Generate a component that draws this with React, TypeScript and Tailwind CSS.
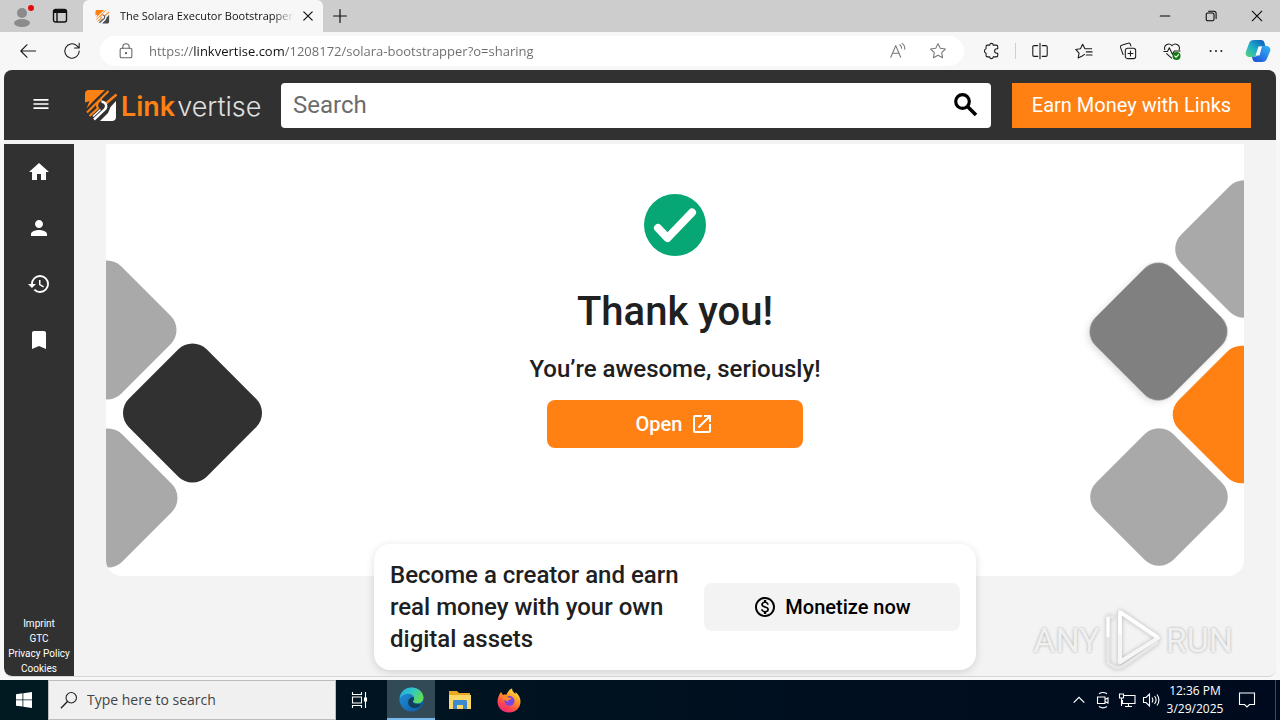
import type { ReactNode } from "react";
import {
  MdBookmark,
  MdHistory,
  MdHome,
  MdMenu,
  MdOpenInNew,
  MdOutlineMonetizationOn,
  MdPerson,
} from "react-icons/md";

const UI = "font-['Open_Sans','Noto_Sans',sans-serif]";

function Line({ size = 18, children, className = "" }: { size?: number; children: ReactNode; className?: string }) {
  return (
    <svg
      width={size}
      height={size}
      viewBox="0 0 20 20"
      fill="none"
      stroke="currentColor"
      strokeWidth="1.2"
      strokeLinecap="round"
      strokeLinejoin="round"
      className={className}
      aria-hidden="true"
    >
      {children}
    </svg>
  );
}

function LinkvertiseMark({ size, dark = false }: { size: number; dark?: boolean }) {
  const low = dark ? "#4a4a4a" : "#ffffff";
  return (
    <svg width={size} height={size} viewBox="0 0 34 34" fill="none" aria-hidden="true">
      <path d="M1 6c0-2.500 1.500-4 4-4h16L9 13.500 2.500 20.500l3-7.500L1 14.500z" fill="#ff8114" />
      <path d="M32 13v16c0 2.500-1.500 4-4 4H16l8-8 2.500-6z" fill={low} />
      <path d="M3 24.500L24.500 3" stroke="#ff8114" strokeWidth="2" />
      <path d="M5.500 28L14 20.300c-2.200-3.600-.3-8 4-8.300" stroke="#ff8114" strokeWidth="2.200" />
      <path d="M32.500 6.500L22 15.500" stroke="#ff8114" strokeWidth="2.400" />
      <path d="M10 31.500L20.500 21.700c3.200-3 1.500-8-3-8" stroke={low} strokeWidth="2.400" />
      <path d="M9 28.500l7.500-7" stroke={low} strokeWidth="1.400" />
    </svg>
  );
}

function TabStrip() {
  return (
    <div className="flex h-8 shrink-0 items-stretch bg-[#cdcdcd]">
      <button aria-label="Profile" className="flex w-11 items-center justify-center">
        <svg width="24" height="26" viewBox="0 0 24 26" aria-hidden="true">
          <circle cx="12" cy="10" r="5" fill="#8b8b8b" />
          <ellipse cx="12" cy="20" rx="8" ry="4" fill="#8b8b8b" />
          <circle cx="21" cy="5" r="3" fill="#e00b0b" />
        </svg>
      </button>
      <button aria-label="Tab actions" className="flex w-8 items-center justify-center">
        <svg width="16" height="16" viewBox="0 0 16 16" fill="none" stroke="#111" strokeWidth="1.4" aria-hidden="true">
          <rect x="1.5" y="1.5" width="13" height="12.5" rx="2" />
          <path d="M2 3.5h12" strokeWidth="3" />
          <path d="M5 4v10" />
        </svg>
      </button>
      <div className="ml-[7px] flex w-60 items-center rounded-t-md bg-[#f7f7f7] pl-3">
        <LinkvertiseMark size={15} dark />
        <span
          className={`${UI} ml-2.5 w-[174px] overflow-hidden bg-linear-to-r from-[#111] from-88% to-transparent bg-clip-text text-[11px] leading-4 whitespace-nowrap text-transparent`}
        >
          The Solara Executor Bootstrapper
        </span>
        <button aria-label="Close tab" className="ml-1 flex size-5 items-center justify-center text-[#111]">
          <Line size={12}>
            <path d="M3 3l14 14M17 3L3 17" strokeWidth="2" />
          </Line>
        </button>
      </div>
      <button aria-label="New tab" className="flex w-[34px] items-center justify-center text-[#111]">
        <Line size={16}>
          <path d="M10 2v16M2 10h16" strokeWidth="1.500" />
        </Line>
      </button>
      <div className="flex-1" />
      <button aria-label="Minimize" className="flex w-[46px] items-center justify-center text-black">
        <Line size={12}>
          <path d="M2 10h16" strokeWidth="1.7" />
        </Line>
      </button>
      <button aria-label="Restore" className="flex w-[46px] items-center justify-center text-black">
        <Line size={12}>
          <rect x="2" y="5" width="13" height="13" rx="2.500" strokeWidth="1.700" />
          <path d="M6 2h9a3.500 3.500 0 0 1 3.500 3.500V14" strokeWidth="1.700" />
        </Line>
      </button>
      <button aria-label="Close" className="flex w-[46px] items-center justify-center text-black">
        <Line size={12}>
          <path d="M2 2l16 16M18 2L2 18" strokeWidth="1.7" />
        </Line>
      </button>
    </div>
  );
}

function ToolButton({ label, children }: { label: string; children: ReactNode }) {
  return (
    <button aria-label={label} className="flex h-8 w-11 items-center justify-center text-[#1b1b1b]">
      {children}
    </button>
  );
}

function CopilotIcon() {
  return (
    <svg width="26" height="24" viewBox="0 0 26 24" aria-hidden="true">
      <defs>
        <linearGradient id="cpA" x1="0" y1="1" x2="1" y2="0">
          <stop offset="0" stopColor="#5bd37a" />
          <stop offset=".45" stopColor="#1fb0c8" />
          <stop offset="1" stopColor="#0b55b8" />
        </linearGradient>
        <linearGradient id="cpB" x1="1" y1="0" x2="0" y2="1">
          <stop offset="0" stopColor="#35b6f5" />
          <stop offset="1" stopColor="#1b49d8" />
        </linearGradient>
      </defs>
      <path d="M9 1h7c2 0 3 1 3.500 3l.8 3h-3c-2 0-3 1-3.600 3l-1.500 5c-.6 2-1.600 3-3.500 3H5c-3 0-5-2-4.200-5L4 4.500C4.800 2 6.500 1 9 1z" fill="url(#cpA)" />
      <path d="M17 23h-6c-2 0-3-1-3.500-3L7 18h2c2 0 3-1 3.600-3l1.600-5c.6-2 1.600-3 3.500-3H21c3 0 5 2 4.200 5L22 19.500c-.8 2.500-2.500 3.500-5 3.500z" fill="url(#cpB)" />
      <path d="M13.500 7.500h3.500l-2.500 9h-4z" fill="#f7fbff" />
    </svg>
  );
}

function Toolbar() {
  return (
    <div className="flex h-[38px] shrink-0 items-center bg-[#f7f7f7] pl-1.5">
      <ToolButton label="Back">
        <Line size={18}>
          <path d="M18.500 10H2M9 3L2 10l7 7" />
        </Line>
      </ToolButton>
      <ToolButton label="Refresh">
        <Line size={18}>
          <path d="M18 10a8 8 0 1 1-2.700-6L17.800 6.500M18 1.500v5.200h-5.200" />
        </Line>
      </ToolButton>
      <div className="ml-1.5 flex h-[30px] flex-1 items-center rounded-full bg-white pr-1.5 pl-[17px]">
        <Line size={18} className="text-[#666]">
          <rect x="3.500" y="7" width="13" height="10.500" rx="1.500" />
          <path d="M6.500 7V5.500a3.500 3.500 0 0 1 7 0V7" />
          <circle cx="10" cy="12.300" r=".7" fill="currentColor" />
        </Line>
        <input
          aria-label="Address"
          defaultValue="https://linkvertise.com/1208172/solara-bootstrapper?o=sharing"
          className={`${UI} ml-3.5 min-w-0 flex-1 bg-[linear-gradient(90deg,#6b6b6b_45px,#111_45px,#111_136px,#6b6b6b_136px)] bg-clip-text text-[13px] leading-5 text-transparent outline-none`}
        />
        <button aria-label="Read aloud" className="flex w-10 items-center justify-center text-[#777]">
          <Line size={18}>
            <path d="M2 17L7.500 4 13 17M4 12.500h7M12 3c1.500 1 2 2.500 2 4M14.500 1.500c2.200 1.500 3.200 4 3 6.500" />
          </Line>
        </button>
        <button aria-label="Add to favorites" className="flex w-10 items-center justify-center text-[#777]">
          <Line size={18}>
            <path d="M10 1.800l2.500 5.200 5.700.8-4.100 4 1 5.700L10 14.800l-5.100 2.700 1-5.700-4.100-4 5.700-.8z" />
          </Line>
        </button>
      </div>
      <div className="ml-[5px] flex items-center">
        <ToolButton label="Extensions">
          <Line size={18}>
            <path d="M6 3.500h2.500a2 2 0 0 1 4 0H16a1.500 1.500 0 0 1 1.500 1.500v2.500h-1a2.500 2.500 0 0 0 0 5h1V15a1.500 1.500 0 0 1-1.500 1.500h-3.500a2 2 0 0 1-4 0H6A1.500 1.500 0 0 1 4.500 15v-2.600a2.500 2.500 0 0 1 0-4.800V5A1.500 1.500 0 0 1 6 3.500z" />
          </Line>
        </ToolButton>
        <div className="mx-0.5 h-4 w-px bg-[#cfcfcf]" />
        <ToolButton label="Split screen">
          <Line size={18}>
            <path d="M7.500 4H3.500A1.500 1.500 0 0 0 2 5.500v9A1.500 1.500 0 0 0 3.500 16h4M12.500 4h4A1.500 1.500 0 0 1 18 5.500v9a1.500 1.500 0 0 1-1.500 1.500h-4M10 1.500v17" />
          </Line>
        </ToolButton>
        <ToolButton label="Favorites">
          <Line size={18}>
            <path d="M10.500 13.800L8 15.500l-4.500 2.300 1-5.500L.8 8.300l5.200-.8L8.500 2.500 11 7.500h7.500M12.500 11h6.500M12.500 14.500h6.500" />
          </Line>
        </ToolButton>
        <ToolButton label="Collections">
          <Line size={18}>
            <rect x="7" y="7" width="11.500" height="11.500" rx="2.500" />
            <path d="M12.750 10v5.500M10 12.750h5.500M4.500 14l-2.800-8a2 2 0 0 1 1.300-2.500L10 1.300a2 2 0 0 1 2.600 1.300l.6 1.700" />
          </Line>
        </ToolButton>
        <ToolButton label="Browser essentials">
          <Line size={18}>
            <path d="M2 8.500C.5 4 6-.2 10 4c4-4.200 9.500 0 8 4.500M1 10.500h4l2-4 3.500 7 2-3.500H19M4 13l5.500 5" />
            <circle cx="15" cy="15.500" r="4.500" fill="#107c10" stroke="none" />
            <path d="M13 15.500l1.500 1.500 2.700-2.900" stroke="#fff" />
          </Line>
        </ToolButton>
        <ToolButton label="Settings and more">
          <Line size={18}>
            <path d="M4 10h.01M10 10h.01M16 10h.01" strokeWidth="2.200" />
          </Line>
        </ToolButton>
        <button aria-label="Copilot" className="flex w-10 items-center justify-center">
          <CopilotIcon />
        </button>
        <div className="w-0.5" />
      </div>
    </div>
  );
}

function SiteHeader() {
  return (
    <header className="flex h-[70px] shrink-0 items-center bg-[#313131] pr-[25px] pl-[27px]">
      <button aria-label="Menu" className="mb-0.5 flex size-5 items-center justify-center text-white">
        <MdMenu size={20} />
      </button>
      <a href="#" className="ml-[33px] flex w-[197px] shrink-0 items-center font-['Inter',sans-serif] text-[27px] leading-8">
        <LinkvertiseMark size={34} />
        <span className="ml-[3px] pt-1 font-semibold text-[#ff8114]">Link</span>
        <span className="ml-0.5 pt-1 font-light text-[#e0e0e0]">vertise</span>
      </a>
      <form className="flex h-[45px] min-w-0 flex-1 items-center rounded-sm bg-white pr-3 pl-3">
        <input
          aria-label="Search"
          placeholder="Search"
          className="min-w-0 flex-1 text-2xl text-black outline-none placeholder:text-[#6c6c6c]"
        />
        <button type="button" aria-label="Submit search" className="text-black">
          <svg width="26" height="26" viewBox="0 0 26 26" fill="none" stroke="currentColor" aria-hidden="true">
            <circle cx="9.500" cy="9.500" r="6.800" strokeWidth="3.200" />
            <path d="M14.500 14.500l8.500 8.500" strokeWidth="3.600" />
          </svg>
        </button>
      </form>
      <button className="ml-[21px] h-[45px] w-[239px] shrink-0 bg-[#ff8114] text-xl text-white">
        Earn Money with Links
      </button>
    </header>
  );
}

function Sidebar() {
  const items = [
    { label: "Home", icon: <MdHome size={24} /> },
    { label: "Profile", icon: <MdPerson size={24} /> },
    { label: "History", icon: <MdHistory size={24} /> },
    { label: "Bookmarks", icon: <MdBookmark size={24} /> },
  ];
  const links = ["Imprint", "GTC", "Privacy Policy", "Cookies"];
  return (
    <nav className="flex w-[70px] shrink-0 flex-col justify-between rounded-bl-lg bg-[#313131] text-white">
      <div className="flex flex-col">
        {items.map((item) => (
          <a key={item.label} href="#" aria-label={item.label} className="flex h-14 items-center justify-center">
            {item.icon}
          </a>
        ))}
      </div>
      <div className="flex flex-col items-center text-[10px] leading-[15px] whitespace-nowrap">
        {links.map((link) => (
          <a key={link} href="#">
            {link}
          </a>
        ))}
      </div>
    </nav>
  );
}

function Diamond({ cx, cy, fill, size = 110, className }: { cx: number; cy: number; fill: string; size?: number; className?: string }) {
  return (
    <rect
      x={cx - size / 2}
      y={cy - size / 2}
      width={size}
      height={size}
      rx="20"
      fill={fill}
      transform={`rotate(45 ${cx} ${cy})`}
      className={className}
    />
  );
}

function Hero() {
  return (
    <section className="relative flex h-[432px] flex-col items-center overflow-hidden rounded-b-2xl bg-white text-[#202020]">
      <svg className="absolute top-0 left-0" width="160" height="432" viewBox="0 0 160 432" aria-hidden="true">
        <Diamond cx={1} cy={186} fill="#a9a9a9" />
        <Diamond cx={2} cy={354} fill="#a9a9a9" />
        <Diamond cx={86.5} cy={269} fill="#313131" />
      </svg>
      <svg className="absolute top-0 right-0" width="164" height="432" viewBox="0 0 164 432" aria-hidden="true">
        <Diamond cx={164} cy={105} size={109} fill="#a9a9a9" />
        <Diamond cx={78.5} cy={187.5} size={109} fill="#808080" className="drop-shadow-md" />
        <Diamond cx={161.5} cy={270.5} size={109} fill="#ff8114" />
        <Diamond cx={79} cy={353} size={109} fill="#a9a9a9" />
      </svg>
      <svg className="mt-[50px]" width="62" height="62" viewBox="0 0 62 62" fill="none" aria-hidden="true">
        <circle cx="31" cy="31" r="31" fill="#06a774" />
        <path d="M14 34l9.500 10L48 18.500" stroke="#fff" strokeWidth="8" strokeLinecap="round" strokeLinejoin="round" />
      </svg>
      <h1 className="mt-8 text-[40px] leading-12 font-medium">Thank you!</h1>
      <p className="mt-[17px] text-2xl leading-8 font-medium">You’re awesome, seriously!</p>
      <button className="mt-[15px] flex h-12 w-64 items-center justify-center gap-2 rounded-lg bg-[#ff8114] text-xl font-medium text-white">
        Open
        <MdOpenInNew size={24} />
      </button>
    </section>
  );
}

function CreatorCard() {
  return (
    <section className="relative mx-auto -mt-8 flex w-[602px] items-center justify-between rounded-2xl bg-white px-4 py-[15px] shadow-[0_2px_8px_rgba(0,0,0,0.14)]">
      <p className="w-[300px] text-2xl leading-8 font-medium text-[#202020]">
        Become a creator and earn real money with your own digital assets
      </p>
      <button className="flex h-12 w-64 items-center justify-center gap-2 rounded-lg bg-[#f3f3f3] text-xl font-medium text-black">
        <MdOutlineMonetizationOn size={24} />
        Monetize now
      </button>
    </section>
  );
}

function Watermark() {
  return (
    <div className="absolute right-[43px] bottom-1 flex items-center gap-1 text-[34px] leading-none font-normal text-[#f0f0f0] [text-shadow:0_0_3px_rgba(0,0,0,0.3)]">
      <span>ANY</span>
      <svg width="58" height="64" viewBox="0 0 58 64" fill="none" strokeLinejoin="round" className="drop-shadow-[0_0_2px_rgba(0,0,0,0.25)]" aria-hidden="true">
        <path d="M16 4v50l38-24z" fill="none" stroke="#f6f6f6" strokeWidth="4" />
        <path d="M10 9H4v46l8 5 6-1M18 59l36-25" stroke="#e8e8e8" strokeWidth="3" />
        <path d="M16 4v22M16 4l38 25M4 9v20" stroke="#ffffff" strokeWidth="3" />
      </svg>
      <span>RUN</span>
    </div>
  );
}

function WinIcon({ children, size = 18 }: { children: ReactNode; size?: number }) {
  return (
    <svg width={size} height={size} viewBox="0 0 18 18" fill="none" stroke="#fff" strokeWidth="1.1" aria-hidden="true">
      {children}
    </svg>
  );
}

function EdgeIcon() {
  return (
    <svg width="25" height="25" viewBox="0 0 26 26" aria-hidden="true">
      <defs>
        <linearGradient id="edA" x1="0" y1="0" x2="1" y2=".5">
          <stop offset="0" stopColor="#24a8e0" />
          <stop offset=".5" stopColor="#2fc6c6" />
          <stop offset="1" stopColor="#5fdc5a" />
        </linearGradient>
        <linearGradient id="edB" x1="0" y1="0" x2="1" y2="1">
          <stop offset="0" stopColor="#2394dc" />
          <stop offset="1" stopColor="#0c59a4" />
        </linearGradient>
      </defs>
      <circle cx="13" cy="13" r="12.500" fill="url(#edB)" />
      <path d="M.6 12C1.500 5 6.500.5 13 .5c7 0 12.500 5 12.500 10.500 0 4-3 6-6 6-3.500 0-5-1.300-5-2.300 0-.8 1.200-1.200 1.200-3.200 0-2.500-2.500-4.500-6-4.500C6 7 2.500 8.500.6 12z" fill="url(#edA)" />
      <path d="M9.500 16c0-3 2-5.200 5-5.500.8.500 1.100 1.200 1.100 2 0 1.500-1.100 1.700-1.100 2.600 0 1.200 1.700 2.700 5 2.700 1.500 0 3-.4 4-1-1.200 3-4 5-7 5-4 0-7-2.500-7-5.800z" fill="#123f5c" />
    </svg>
  );
}

function FolderIcon() {
  return (
    <svg width="24" height="22" viewBox="0 0 24 22" aria-hidden="true">
      <path d="M1 2h8l2 2h11v16H1z" fill="#e9a820" />
      <path d="M1 6h22v14H1z" fill="#fbd768" />
      <path d="M5 20v-7.500c0-1 .5-1.500 1.500-1.500h11c1 0 1.500.5 1.500 1.500V20h-4v-4H9v4z" fill="#3b8ad0" />
    </svg>
  );
}

function FirefoxIcon() {
  return (
    <svg width="24" height="25" viewBox="0 0 24 25" aria-hidden="true">
      <defs>
        <linearGradient id="ffA" x1=".8" y1="0" x2=".2" y2="1">
          <stop offset="0" stopColor="#fff04a" />
          <stop offset=".4" stopColor="#ff9126" />
          <stop offset=".75" stopColor="#ff4055" />
          <stop offset="1" stopColor="#e5257f" />
        </linearGradient>
      </defs>
      <path d="M4 4l2 3c1-.4 2.500-.5 3.500-.3C10.500 4 12.500 1.500 15 .5c.3 3 2 4 3.500 5.500V4c3 2.500 5 5.500 5 9.500C23.500 20 18.500 24.500 12 24.500S.5 20 .5 13.500C.5 10 2 6.500 4 4z" fill="url(#ffA)" />
      <circle cx="12.500" cy="13" r="5" fill="#7a45e0" />
      <path d="M5 10c2-1.500 4-1.500 6-.8 1 .6 2.500 1 3.500.8-.5 1.500-2 1.700-3.200 2.200-.8.500-.8 2 .7 2.500" fill="#ff8a2a" />
    </svg>
  );
}

function Taskbar() {
  return (
    <footer className={`${UI} flex h-10 shrink-0 items-stretch bg-linear-to-r from-[#001a22] via-[#001120] to-[#000a1e] text-white`}>
      <button aria-label="Start" className="flex w-12 items-center justify-center">
        <svg width="16" height="16" viewBox="0 0 16 16" fill="#fff" aria-hidden="true">
          <path d="M0 2.200l6.500-.9v6.200H0zM7.300 1.200L16 0v7.500H7.300zM0 8.300h6.500v6.200L0 13.700zM7.300 8.300H16V16l-8.700-1.200z" />
        </svg>
      </button>
      <label className="flex w-72 items-center border border-[#bdbdbd] bg-[#f0f0f0] pl-[11px] text-[#222]">
        <Line size={18}>
          <circle cx="12.500" cy="7.500" r="5.800" />
          <path d="M8.300 11.700L1.500 18.500" strokeWidth="1.600" />
        </Line>
        <input
          aria-label="Type here to search"
          placeholder="Type here to search"
          className="ml-[9px] min-w-0 flex-1 text-sm outline-none placeholder:text-[#444]"
        />
      </label>
      <button aria-label="Task view" className="flex w-12 items-center justify-center">
        <WinIcon>
          <path d="M1.500 1v2.500h9V1M1.500 17v-2.500h9V17M1.500 6h9v6h-9zM14.500 1v16" />
          <path d="M13.500 7h2v3h-2z" fill="#fff" />
        </WinIcon>
      </button>
      <button aria-label="Microsoft Edge" className="ml-[3px] flex w-12 items-center justify-center border-b-2 border-[#76b9ed] bg-[#324a55]">
        <EdgeIcon />
      </button>
      <button aria-label="File Explorer" className="ml-px flex w-12 items-center justify-center">
        <FolderIcon />
      </button>
      <button aria-label="Firefox" className="ml-px flex w-12 items-center justify-center">
        <FirefoxIcon />
      </button>
      <div className="flex-1" />
      <button aria-label="Show hidden icons" className="flex w-6 items-center justify-center">
        <WinIcon size={16}>
          <path d="M3 12l6-6 6 6" strokeWidth="1.400" />
        </WinIcon>
      </button>
      <button aria-label="Meet now" className="flex w-6 items-center justify-center">
        <WinIcon size={18}>
          <path d="M3.500 6h7.500v6.500H3.500zM11 8.500l3-1.500v5l-3-1.500M5 2.800c2.500-1.700 5.500-1.700 8 0M5 15.500c2.500 1.700 5.500 1.700 8 0" />
        </WinIcon>
      </button>
      <button aria-label="Network" className="flex w-6 items-center justify-center">
        <WinIcon size={18}>
          <path d="M6 4.500h11v8H4.500V9M1.500 3h4v4h-4zM3.500 7v8M7 15.500h7M10.500 12.500v3" />
        </WinIcon>
      </button>
      <button aria-label="Volume" className="flex w-6 items-center justify-center">
        <WinIcon size={18}>
          <path d="M1.500 6.500H4L7.500 3v12L4 11.500H1.500zM10 6.500c1 1.500 1 3.500 0 5M12.500 5c2 2.500 2 5.500 0 8M15 3.500c2.500 3.500 2.500 7.500 0 11" />
        </WinIcon>
      </button>
      <button className="flex w-16 flex-col items-center justify-center text-xs leading-[18px] whitespace-nowrap">
        <time>12:36 PM</time>
        <time>3/29/2025</time>
      </button>
      <button aria-label="Notifications" className="flex w-10 items-center justify-center">
        <WinIcon size={18}>
          <path d="M1.500 2h15v11.500h-5L9 16l-2.500-2.500h-5z" />
        </WinIcon>
      </button>
      <button aria-label="Show desktop" className="ml-2 w-[5px] border-l border-[#3c4654]" />
    </footer>
  );
}

export default function App() {
  return (
    <div className="flex h-screen flex-col overflow-hidden bg-[#f7f7f7] font-['Roboto',sans-serif]">
      <TabStrip />
      <Toolbar />
      <div className="relative mx-1 mb-[3px] flex min-h-0 flex-1 flex-col overflow-hidden rounded-lg border-b border-[#d5d5d5] bg-[#f3f3f3]">
        <SiteHeader />
        <div className="flex min-h-0 flex-1 pt-1">
          <Sidebar />
          <main className="min-w-0 flex-1 px-8">
            <Hero />
            <CreatorCard />
          </main>
        </div>
        <Watermark />
      </div>
      <Taskbar />
    </div>
  );
}
